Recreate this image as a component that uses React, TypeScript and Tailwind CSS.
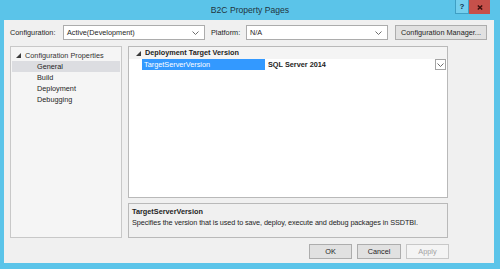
const font = { fontFamily: '"Liberation Sans", Arial, sans-serif' };

function Chevron() {
  return (
    <svg width="7" height="4" viewBox="0 0 7 4" className="shrink-0">
      <path d="M0.5 0.5 L3.5 3.5 L6.5 0.5" fill="none" stroke="#6d6d6d" strokeWidth="1" />
    </svg>
  );
}

function Expander() {
  return (
    <svg width="5" height="5" viewBox="0 0 5 5" className="shrink-0">
      <polygon points="5,0 5,5 0,5" fill="#3c3c3c" />
    </svg>
  );
}

function CloseGlyph() {
  return (
    <svg width="6" height="5" viewBox="0 0 6 5">
      <path d="M0.8 0.5 L5.2 4.5 M5.2 0.5 L0.8 4.5" stroke="#3b0f0c" strokeWidth="1.4" />
    </svg>
  );
}

function Combo({ value }: { value: string }) {
  return (
    <div className="w-[142px] h-[15px] bg-white border border-[#acacac] flex items-center pl-[3px] pr-[5px]">
      <span className="flex-1 text-[#1e1e1e]">{value}</span>
      <Chevron />
    </div>
  );
}

export default function App() {
  const treeItems = ["General", "Build", "Deployment", "Debugging"];

  return (
    <div className="w-[500px] h-[269px] bg-[#5bc4e9] flex flex-col text-[7.3px] leading-none" style={font}>
      {/* title bar */}
      <div className="h-[20px] shrink-0 flex items-start">
        <div className="w-[45px] shrink-0" />
        <div className="flex-1 h-full flex items-center justify-center text-[8.6px] text-[#22343e] pt-[1px]">
          B2C Property Pages
        </div>
        <div className="flex shrink-0 mr-[10px] h-[14px]">
          <div className="w-[14px] h-[14px] bg-[#74cfee] border-x border-b border-[#3f9fc4] flex items-center justify-center text-[8px] font-bold text-[#12344e]">
            ?
          </div>
          <div className="w-[21px] h-[14px] bg-[#c6504a] flex items-center justify-center">
            <CloseGlyph />
          </div>
        </div>
      </div>

      {/* client area */}
      <div className="flex-1 ml-[4px] mr-[6px] mb-[6px] bg-[#f0f0f0] flex flex-col pt-[5px]">
        {/* configuration row */}
        <div className="flex items-center h-[15px] pl-[6px] pr-[7px]">
          <span className="w-[53px] text-[#1e1e1e]">Configuration:</span>
          <Combo value="Active(Development)" />
          <span className="w-[41px] pl-[6px] text-[#1e1e1e]">Platform:</span>
          <Combo value="N/A" />
          <div className="ml-[7px] w-[92px] h-[15px] bg-[#e1e1e1] border border-[#adadad] flex items-center justify-center text-[#1e1e1e]">
            Configuration Manager...
          </div>
        </div>

        {/* main panels */}
        <div className="flex mt-[6px] pl-[6px] h-[192px]">
          {/* tree */}
          <div className="w-[112px] h-full border border-[#c8c8c8] bg-[#f5f5f5] pt-[3px] px-[1px]">
            <div className="flex items-center h-[11px] pl-[4px] gap-[4px] text-[#333]">
              <Expander />
              <span>Configuration Properties</span>
            </div>
            {treeItems.map((item, i) => (
              <div
                key={item}
                className={`h-[11px] flex items-center pl-[25px] text-[#1e1e1e] ${i === 0 ? "bg-[#dcdde1]" : ""}`}
              >
                {item}
              </div>
            ))}
          </div>

          {/* property grid + description */}
          <div className="ml-[6px] w-[320px] flex flex-col">
            <div className="h-[152px] border border-[#b9b9b9] bg-white">
              <div className="h-[12px] bg-[#f4f4f4] flex items-center pl-[7px] gap-[4px]">
                <Expander />
                <span className="font-bold text-[#1e1e1e]">Deployment Target Version</span>
              </div>
              <div className="h-[11px] flex items-center">
                <div className="ml-[13px] w-[123px] h-full bg-[#3399ff] text-white flex items-center pl-[2px]">
                  TargetServerVersion
                </div>
                <span className="flex-1 pl-[3px] font-bold text-[#1e1e1e]">SQL Server 2014</span>
                <div className="w-[11px] h-[11px] border border-[#a5a5a5] bg-white flex items-center justify-center mr-[1px]">
                  <Chevron />
                </div>
              </div>
            </div>
            <div className="mt-[5px] h-[35px] border border-[#b9b9b9] bg-[#f0f0f0] pl-[3px] pt-[4px]">
              <div className="font-bold text-[#1e1e1e]">TargetServerVersion</div>
              <div className="mt-[4px] text-[#1e1e1e] whitespace-nowrap tracking-[-0.1px]">
                Specifies the version that is used to save, deploy, execute and debug packages in SSDTBI.
              </div>
            </div>
          </div>
        </div>

        {/* dialog buttons */}
        <div className="flex mt-[6px] pl-[305px] gap-[5px]">
          <div className="w-[43px] h-[15px] bg-[#e1e1e1] border border-[#adadad] flex items-center justify-center text-[#1e1e1e]">
            OK
          </div>
          <div className="w-[44px] h-[15px] bg-[#e1e1e1] border border-[#adadad] flex items-center justify-center text-[#1e1e1e]">
            Cancel
          </div>
          <div className="w-[43px] h-[15px] bg-[#f4f4f4] border border-[#c8c8c8] flex items-center justify-center text-[#a2a2a2]">
            Apply
          </div>
        </div>
      </div>
    </div>
  );
}
